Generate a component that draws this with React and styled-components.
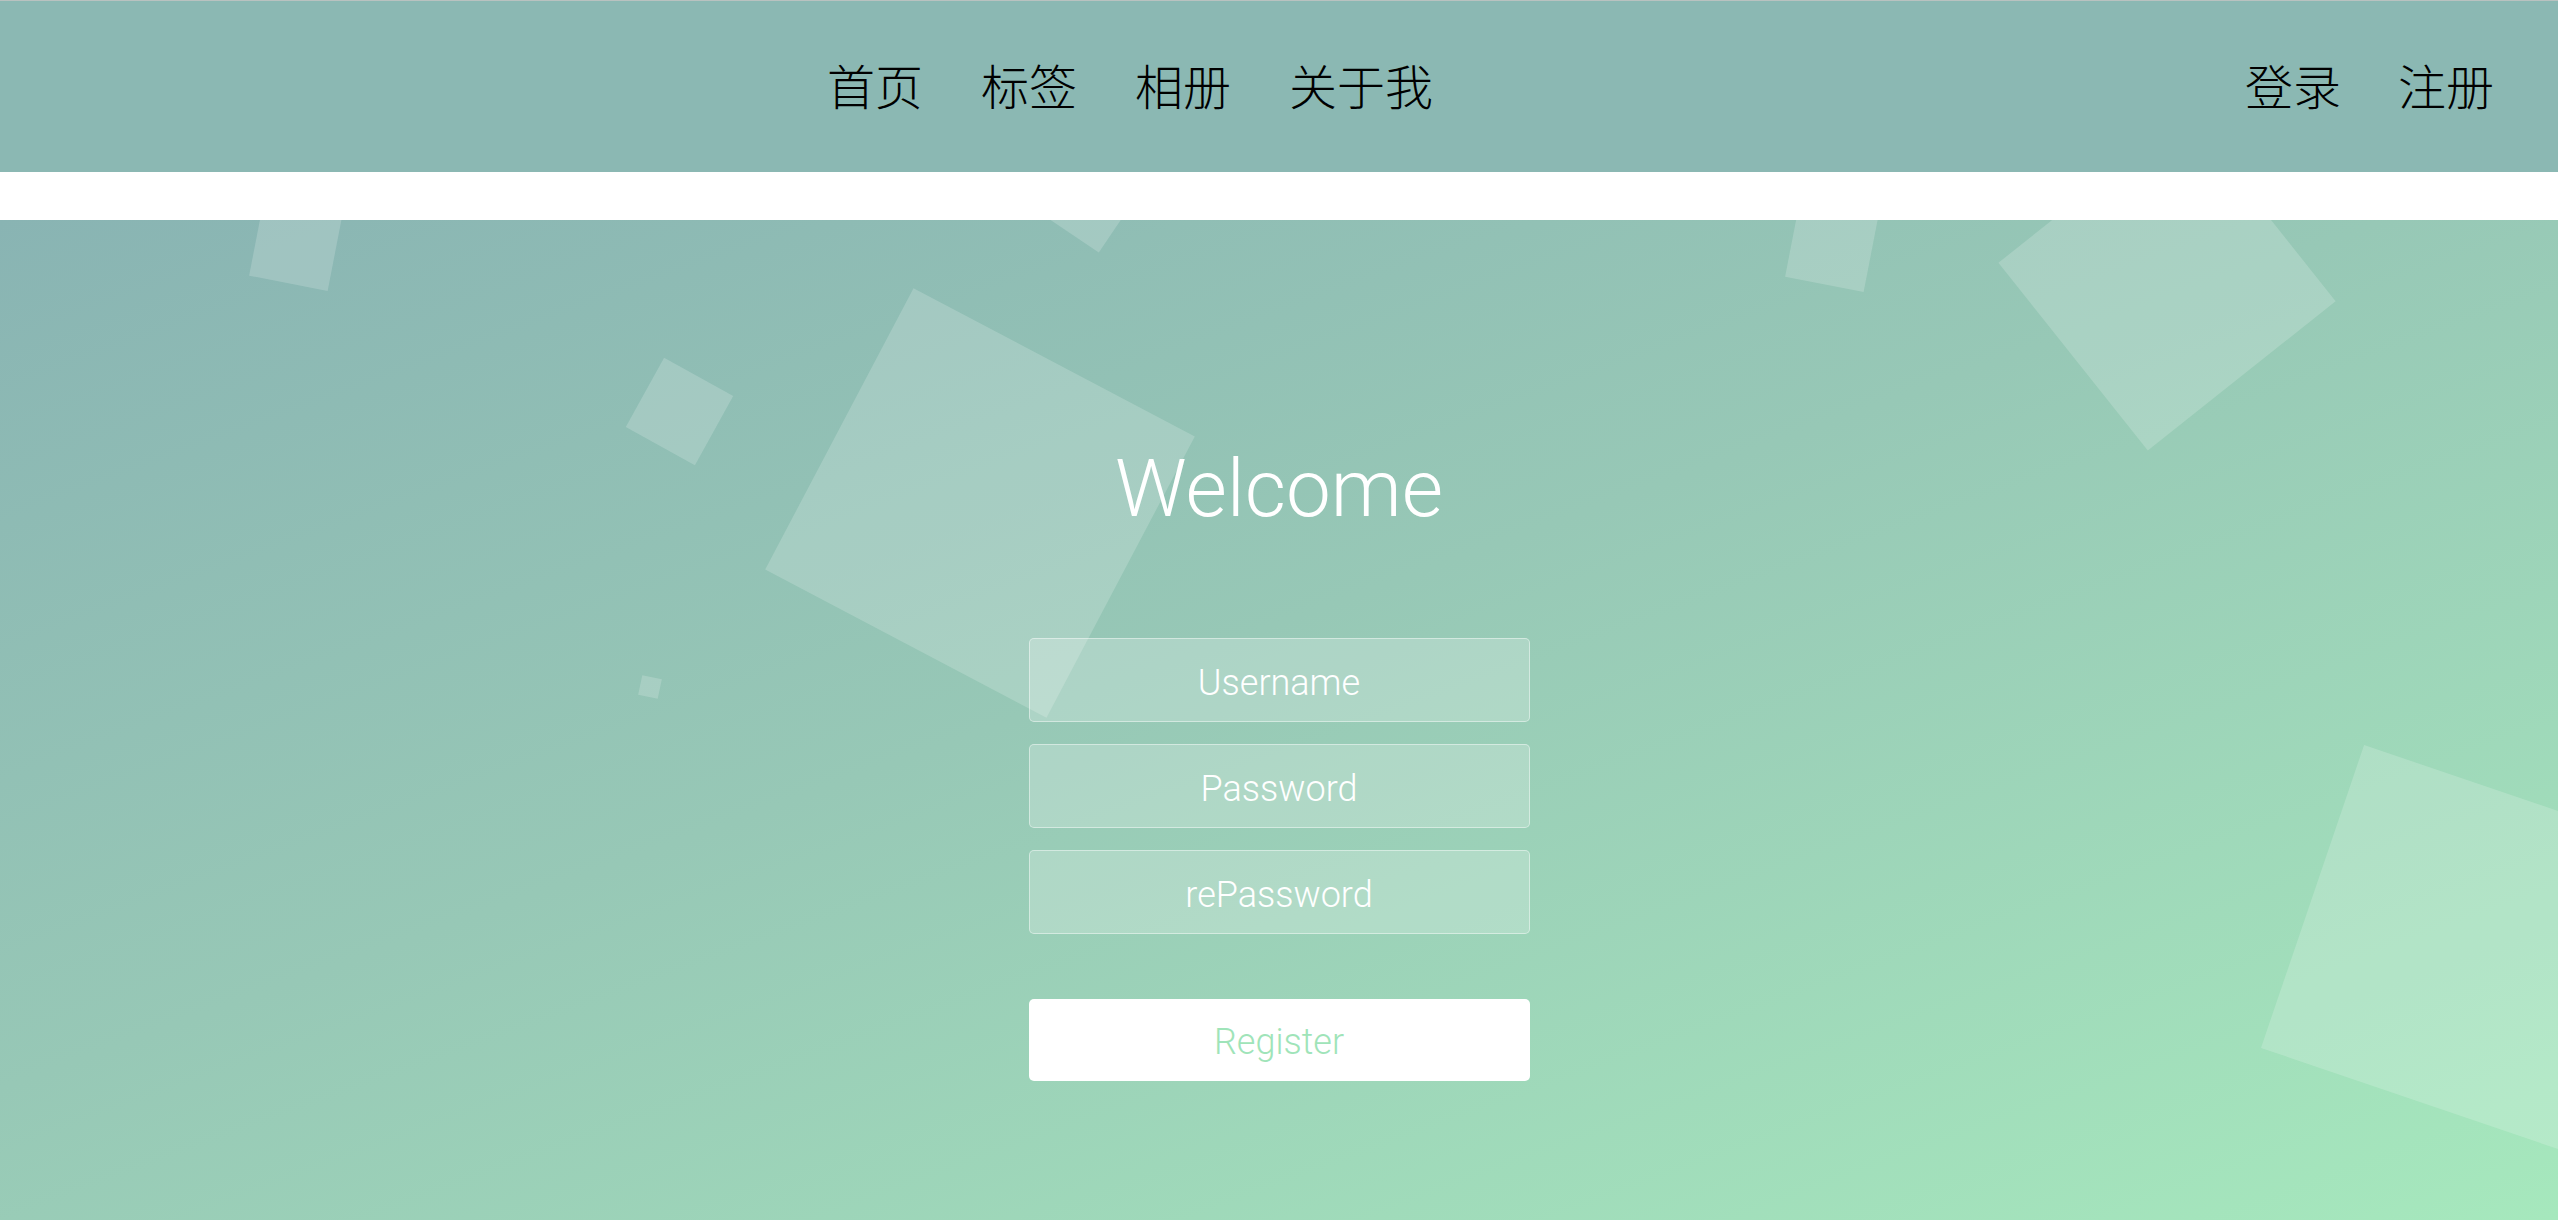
import React from "react";
import styled, { createGlobalStyle } from "styled-components";

const GlobalStyle = createGlobalStyle`
  html, body { margin: 0; padding: 0; background: #ffffff; }
  body { font-family: "Liberation Sans", Arial, sans-serif; }
  * { box-sizing: border-box; }
`;

const Page = styled.div`
  width: 100%;
  min-height: 1220px;
  display: flex;
  flex-direction: column;
  background: #ffffff;
`;

const Header = styled.header`
  height: 172px;
  border-top: 1px solid #b9c2c0;
  background: #8bb8b3;
  display: flex;
  align-items: center;
  justify-content: space-between;
  padding: 0 64px 6px 827px;
`;

const NavGroup = styled.nav`
  display: flex;
  align-items: center;
  gap: ${(p) => p.$gap}px;
`;

const NavLink = styled.a`
  font-family: "Noto Sans CJK SC", "Noto Sans", sans-serif;
  font-weight: 300;
  font-size: 48px;
  line-height: 1;
  color: #000000;
  text-decoration: none;
  cursor: pointer;
`;

const Spacer = styled.div`
  height: 48px;
  background: #ffffff;
`;

const Stage = styled.main`
  position: relative;
  height: 1000px;
  overflow: hidden;
  background: linear-gradient(160deg, #89b4b3 0%, #97c8b6 45%, #a6e8bd 100%);
`;

const Bubble = styled.span`
  position: absolute;
  display: block;
  background: rgba(255, 255, 255, 0.18);
`;

const FormWrap = styled.div`
  position: relative;
  z-index: 1;
  display: flex;
  flex-direction: column;
  align-items: center;
  padding-top: 229px;
`;

const Title = styled.h1`
  margin: 0 0 109px;
  font-family: Roboto, "Liberation Sans", sans-serif;
  font-weight: 300;
  font-size: 80px;
  line-height: 80px;
  color: #ffffff;
  letter-spacing: 0;
`;

const Form = styled.form`
  display: flex;
  flex-direction: column;
  align-items: center;
  gap: 22px;
  width: 501px;
`;

const Field = styled.input`
  width: 100%;
  height: 84px;
  padding: 6px 0 0;
  border: 1px solid rgba(255, 255, 255, 0.45);
  border-radius: 5px;
  background: rgba(255, 255, 255, 0.22);
  color: #ffffff;
  text-align: center;
  font-family: Roboto, "Liberation Sans", sans-serif;
  font-weight: 300;
  font-size: 36px;
  outline: none;
  &::placeholder { color: #ffffff; opacity: 1; }
`;

const Submit = styled.button`
  width: 100%;
  height: 82px;
  margin-top: 43px;
  padding: 4px 0 0;
  border: none;
  border-radius: 5px;
  background: #ffffff;
  color: #9fe4b9;
  font-family: Roboto, "Liberation Sans", sans-serif;
  font-weight: 300;
  font-size: 36px;
  cursor: pointer;
`;

const bubbles = [
  { x: 256, y: -16, s: 80, r: 11 },
  { x: 1048, y: -63, s: 80, r: 34 },
  { x: 640, y: 152, s: 79, r: 29 },
  { x: 821, y: 124, s: 318, r: 27.8 },
  { x: 640, y: 457, s: 20, r: 12 },
  { x: 1792, y: -15, s: 80, r: 11 },
  { x: 2047, y: -58, s: 240, r: 51.5 },
  { x: 2304, y: 568, s: 320, r: 18.8 },
];

export default function App() {
  return (
    <Page>
      <GlobalStyle />
      <Header>
        <NavGroup $gap={58}>
          <NavLink>首页</NavLink>
          <NavLink>标签</NavLink>
          <NavLink>相册</NavLink>
          <NavLink>关于我</NavLink>
        </NavGroup>
        <NavGroup $gap={57}>
          <NavLink>登录</NavLink>
          <NavLink>注册</NavLink>
        </NavGroup>
      </Header>
      <Spacer />
      <Stage>
        {bubbles.map((b, i) => (
          <Bubble
            key={i}
            style={{
              left: b.x,
              top: b.y,
              width: b.s,
              height: b.s,
              transform: `rotate(${b.r}deg)`,
            }}
          />
        ))}
        <FormWrap>
          <Title>Welcome</Title>
          <Form onSubmit={(e) => e.preventDefault()}>
            <Field type="text" placeholder="Username" />
            <Field type="password" placeholder="Password" />
            <Field type="password" placeholder="rePassword" />
            <Submit type="submit">Register</Submit>
          </Form>
        </FormWrap>
      </Stage>
    </Page>
  );
}
